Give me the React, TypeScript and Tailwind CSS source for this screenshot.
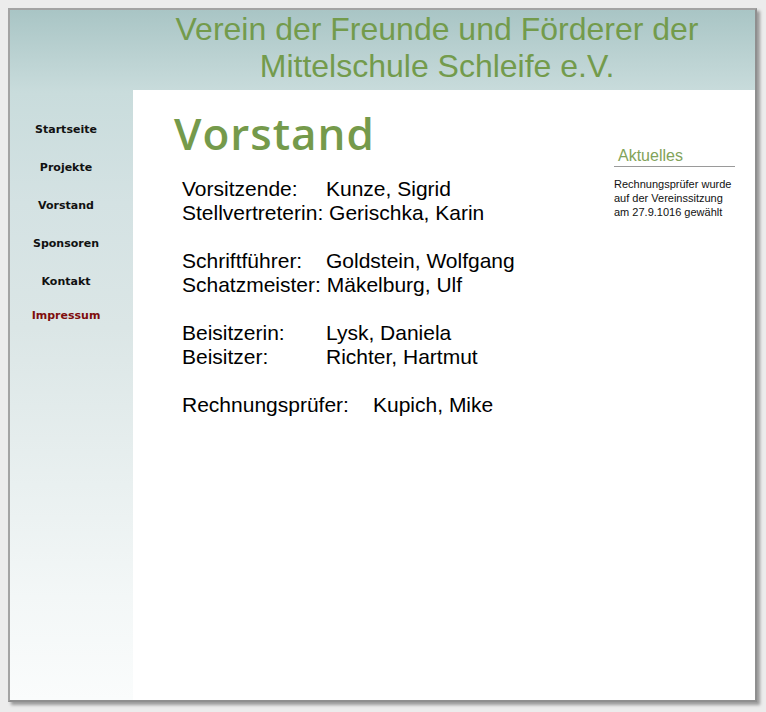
const navItems = [
  { label: 'Startseite', active: false },
  { label: 'Projekte', active: false },
  { label: 'Vorstand', active: false },
  { label: 'Sponsoren', active: false },
  { label: 'Kontakt', active: false },
  { label: 'Impressum', active: true },
]

const groups = [
  [
    { role: 'Vorsitzende:', name: 'Kunze, Sigrid', w: 'w-[144px]' },
    { role: 'Stellvertreterin:', name: 'Gerischka, Karin', w: '' },
  ],
  [
    { role: 'Schriftführer:', name: 'Goldstein, Wolfgang', w: 'w-[144px]' },
    { role: 'Schatzmeister:', name: 'Mäkelburg, Ulf', w: '' },
  ],
  [
    { role: 'Beisitzerin:', name: 'Lysk, Daniela', w: 'w-[144px]' },
    { role: 'Beisitzer:', name: 'Richter, Hartmut', w: 'w-[144px]' },
  ],
  [{ role: 'Rechnungsprüfer:', name: 'Kupich, Mike', w: 'w-[191px]' }],
]

export default function App() {
  return (
    <div className="h-[712px] bg-[#ececec] pt-2 pl-2 font-['Liberation_Sans',Arial,sans-serif]">
      <div className="flex h-[694px] w-[749px] flex-col border-2 border-[#8f8f8f] border-t-[#a3a3a3] border-l-[#a3a3a3] bg-[linear-gradient(to_bottom,#a9c5c5_0%,#c9dcdc_12%,#d4e2e3_28%,#dbe6e6_46%,#f3f7f7_85%,#fafcfc_100%)] shadow-[3px_3px_3px_rgba(0,0,0,0.35)]">
        {/* Header */}
        <header className="h-[80px] pl-[109px] pt-[1px] text-center text-[32px] leading-[37px] text-[#739b4c]">
          <div>Verein der Freunde und Förderer der</div>
          <div>Mittelschule Schleife e.V.</div>
        </header>

        <div className="flex flex-1">
          {/* Sidebar */}
          <nav className="w-[123px] pr-[11px] pt-[32px] text-center font-['DejaVu_Sans',Verdana,sans-serif] text-[11px] font-bold leading-[16px]">
            {navItems.map((item, i) => (
              <div
                key={item.label}
                className={
                  item.active
                    ? 'mt-[18px] text-[#7f0d0d]'
                    : i === 0
                      ? 'text-[#111]'
                      : 'mt-[22px] text-[#111]'
                }
              >
                {item.label}
              </div>
            ))}
          </nav>

          {/* Main */}
          <main className="flex flex-1 bg-white">
            <div className="flex-1 pl-[41px]">
              <h1 className="mt-[21px] font-['Open_Sans',sans-serif] text-[44px] font-semibold leading-[44px] tracking-[1px] text-[#759a4b]">
                Vorstand
              </h1>
              <div className="mt-[22px] pl-[8px] text-[21px] leading-[24px] text-black">
                {groups.map((group, gi) => (
                  <div key={gi} className={gi > 0 ? 'mt-[24px]' : ''}>
                    {group.map(row => (
                      <div key={row.role} className="flex whitespace-pre">
                        <span className={row.w}>{row.w ? row.role : row.role + ' '}</span>
                        <span>{row.name}</span>
                      </div>
                    ))}
                  </div>
                ))}
              </div>
            </div>

            {/* Aktuelles */}
            <aside className="mr-[20px] w-[121px] pt-[56px]">
              <div className="border-b border-[#9a9a9a] pl-[4px] text-[16px] leading-[20px] text-[#82a35a]">
                Aktuelles
              </div>
              <p className="mt-[10px] text-[11px] leading-[14px] text-[#111]">
                Rechnungsprüfer wurde auf der Vereinssitzung am 27.9.1016 gewählt
              </p>
            </aside>
          </main>
        </div>
      </div>
    </div>
  )
}
